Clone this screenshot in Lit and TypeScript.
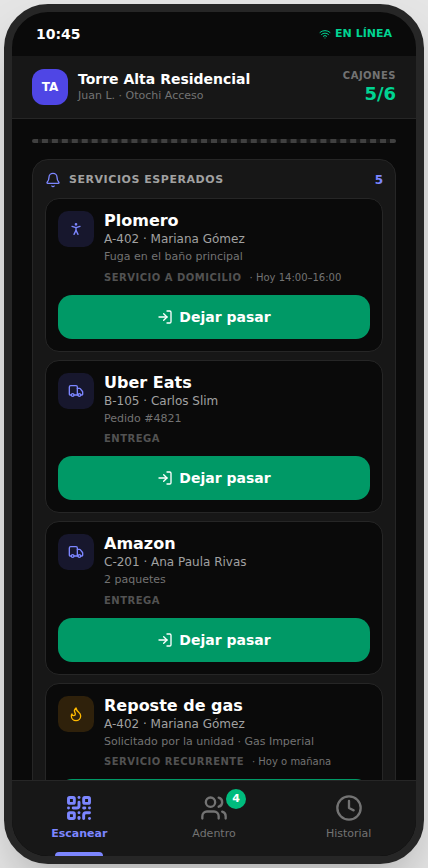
import { LitElement, html, css, svg, nothing } from "lit";
import { customElement, property } from "lit/decorators.js";

const ICONS: Record<string, unknown> = {
  wifi: svg`<path d="M12 20h.01"/><path d="M2 8.82a15 15 0 0 1 20 0"/><path d="M5 12.859a10 10 0 0 1 14 0"/><path d="M8.5 16.429a5 5 0 0 1 7 0"/>`,
  bell: svg`<path d="M10.268 21a2 2 0 0 0 3.464 0"/><path d="M3.262 15.326A1 1 0 0 0 4 17h16a1 1 0 0 0 .74-1.673C19.41 13.956 18 12.499 18 8A6 6 0 0 0 6 8c0 4.499-1.411 5.956-2.738 7.326"/>`,
  person: svg`<circle cx="12" cy="5" r="1"/><path d="m9 20 3-6 3 6"/><path d="m6 8 6 2 6-2"/><path d="M12 10v4"/>`,
  truck: svg`<path d="M14 18V6a2 2 0 0 0-2-2H4a2 2 0 0 0-2 2v11a1 1 0 0 0 1 1h2"/><path d="M15 18H9"/><path d="M19 18h2a1 1 0 0 0 1-1v-3.65a1 1 0 0 0-.22-.624l-3.48-4.35A1 1 0 0 0 17.52 8H14"/><circle cx="17" cy="18" r="2"/><circle cx="7" cy="18" r="2"/>`,
  flame: svg`<path d="M8.5 14.5A2.5 2.5 0 0 0 11 12c0-1.38-.5-2-1-3-1.072-2.143-.224-4.054 2-6 .5 2.5 2 4.9 4 6.5 2 1.6 3 3.5 3 5.5a7 7 0 1 1-14 0c0-1.153.433-2.294 1-3a2.5 2.5 0 0 0 2.5 2.5z"/>`,
  login: svg`<path d="m10 17 5-5-5-5"/><path d="M15 12H3"/><path d="M15 3h4a2 2 0 0 1 2 2v14a2 2 0 0 1-2 2h-4"/>`,
  qr: svg`<rect width="5" height="5" x="3" y="3" rx="1"/><rect width="5" height="5" x="16" y="3" rx="1"/><rect width="5" height="5" x="3" y="16" rx="1"/><path d="M21 16h-3a2 2 0 0 0-2 2v3"/><path d="M21 21v.01"/><path d="M12 7v3a2 2 0 0 1-2 2H7"/><path d="M3 12h.01"/><path d="M12 3h.01"/><path d="M12 16v.01"/><path d="M16 12h1"/><path d="M21 12v.01"/><path d="M12 21v-1"/>`,
  users: svg`<path d="M16 21v-2a4 4 0 0 0-4-4H6a4 4 0 0 0-4 4v2"/><circle cx="9" cy="7" r="4"/><path d="M22 21v-2a4 4 0 0 0-3-3.87"/><path d="M16 3.13a4 4 0 0 1 0 7.75"/>`,
  clock: svg`<circle cx="12" cy="12" r="10"/><path d="M12 6v6l4 2"/>`,
};

const icon = (name: string, size: number, stroke = 2) => html`<svg
  width=${size} height=${size} viewBox="0 0 24 24" fill="none" stroke="currentColor"
  stroke-width=${stroke} stroke-linecap="round" stroke-linejoin="round">${ICONS[name]}</svg>`;

interface Service {
  icon: string;
  title: string;
  unit: string;
  detail: string;
  kind: string;
  when?: string;
  warm?: boolean;
}

const SERVICES: Service[] = [
  { icon: "person", title: "Plomero", unit: "A-402 · Mariana Gómez", detail: "Fuga en el baño principal", kind: "Servicio a domicilio", when: "Hoy 14:00–16:00" },
  { icon: "truck", title: "Uber Eats", unit: "B-105 · Carlos Slim", detail: "Pedido #4821", kind: "Entrega" },
  { icon: "truck", title: "Amazon", unit: "C-201 · Ana Paula Rivas", detail: "2 paquetes", kind: "Entrega" },
  { icon: "flame", title: "Reposte de gas", unit: "A-402 · Mariana Gómez", detail: "Solicitado por la unidad · Gas Imperial", kind: "Servicio recurrente", when: "Hoy o mañana", warm: true },
];

@customElement("service-card")
class ServiceCard extends LitElement {
  @property({ attribute: false }) service!: Service;

  static styles = css`
    :host { display: block; box-sizing: border-box; flex: none; background: #0a0a0a; border: 1px solid #262626; border-radius: 14px; padding: 12px; }
    svg { display: block; flex: none; }
    .row { display: flex; gap: 10px; margin-bottom: 10px; }
    .tile { width: 36px; height: 36px; flex: none; border-radius: 10px; display: flex; align-items: center; justify-content: center; background: #17172d; color: #7c86ff; }
    .tile.warm { background: #2f210b; color: #ffb900; }
    .title { font-size: 16px; line-height: 20px; font-weight: 700; color: #fff; }
    .unit { font-size: 12px; line-height: 16px; color: #a1a1a1; }
    .detail { font-size: 11px; line-height: 16.5px; margin-top: 2px; color: #737373; }
    .meta { font-size: 10px; line-height: 15px; margin-top: 4px; display: flex; gap: 8px; color: #737373; }
    .kind { font-weight: 700; letter-spacing: 0.5px; text-transform: uppercase; color: #525252; }
    button { width: 100%; height: 44px; border: 0; border-radius: 14px; background: #009966; color: #fff; font: 700 14px "DejaVu Sans", sans-serif; display: flex; align-items: center; justify-content: center; gap: 6px; padding: 0; }
  `;

  render() {
    const s = this.service;
    return html`
      <div class="row">
        <div class="tile ${s.warm ? "warm" : ""}">${icon(s.icon, 16)}</div>
        <div>
          <div class="title">${s.title}</div>
          <div class="unit">${s.unit}</div>
          <div class="detail">${s.detail}</div>
          <div class="meta"><span class="kind">${s.kind}</span>${s.when ? html`<span>· ${s.when}</span>` : nothing}</div>
        </div>
      </div>
      <button>${icon("login", 16)}<span>Dejar pasar</span></button>
    `;
  }
}

@customElement("app-root")
class AppRoot extends LitElement {
  static styles = css`
    :host { display: flex; box-sizing: border-box; width: 100%; height: 868px; padding: 4px; background: #e5e5e5; overflow: hidden; font-family: "DejaVu Sans", sans-serif; }
    svg { display: block; flex: none; }
    .phone { box-sizing: border-box; width: 420px; height: 860px; border: 8px solid #262626; border-radius: 44px; background: #0a0a0a; overflow: hidden; display: flex; flex-direction: column; box-shadow: 0 25px 50px -12px rgba(0, 0, 0, 0.25); }
    .status { height: 44px; flex: none; padding: 0 24px; display: flex; align-items: center; justify-content: space-between; color: #fff; font-size: 14px; font-weight: 700; }
    .online { display: flex; align-items: center; gap: 4px; font-size: 11px; line-height: 16.5px; color: #00d492; }
    .head { box-sizing: border-box; height: 63px; flex: none; padding: 0 20px; background: #171717; border-bottom: 1px solid #262626; display: flex; align-items: center; gap: 10px; }
    .avatar { width: 36px; height: 36px; border-radius: 12px; background: #4f46e5; color: #fff; font-size: 12px; font-weight: 700; display: flex; align-items: center; justify-content: center; }
    .who { flex: 1; }
    .name { font-size: 14px; line-height: 16px; padding-bottom: 2px; font-weight: 700; color: #fff; }
    .sub { font-size: 11px; line-height: 13px; padding-bottom: 1px; color: #737373; }
    .slots { text-align: right; font-weight: 700; }
    .slots-label { font-size: 10px; line-height: 15px; letter-spacing: 0.5px; color: #737373; }
    .slots-value { font-size: 18px; line-height: 22.5px; color: #00d492; }
    .main { flex: 1; min-height: 0; overflow: hidden; padding: 20px 20px 0; display: flex; flex-direction: column; gap: 16px; }
    .strip { box-sizing: border-box; height: 4px; flex: none; border: 2px dashed #404040; border-radius: 16px; background: #171717; }
    .panel { flex: none; border: 1px solid #262626; border-radius: 16px; background: #171717; padding: 12px; display: flex; flex-direction: column; gap: 8px; }
    .panel-head { height: 16px; margin-bottom: 2px; display: flex; align-items: center; gap: 8px; color: #7c86ff; font-size: 12px; font-weight: 700; }
    .panel-title { flex: 1; font-size: 11px; line-height: 16px; padding-bottom: 1px; letter-spacing: 0.55px; color: #a1a1a1; }
    .nav { box-sizing: border-box; height: 76px; flex: none; border-top: 1px solid #262626; background: #171717; display: grid; grid-template-columns: repeat(3, 1fr); }
    .tab { position: relative; display: flex; flex-direction: column; align-items: center; gap: 4px; padding-top: 13px; color: #737373; font-size: 11px; line-height: 16.5px; }
    .tab.active { color: #7c86ff; font-weight: 700; }
    .tab.active::after { content: ""; position: absolute; bottom: 0; width: 48px; height: 4px; border-radius: 4px 4px 0 0; background: #7c86ff; }
    .glyph { position: relative; }
    .badge { position: absolute; top: -5px; right: -18px; width: 20px; height: 20px; border-radius: 50%; background: #00bc7d; color: #fff; font-size: 11px; line-height: 19px; font-weight: 700; text-align: center; }
  `;

  render() {
    return html`
      <div class="phone">
        <div class="status"><span>10:45</span><span class="online">${icon("wifi", 12)}<span>EN LÍNEA</span></span></div>
        <div class="head">
          <div class="avatar">TA</div>
          <div class="who">
            <div class="name">Torre Alta Residencial</div>
            <div class="sub">Juan L. · Otochi Acceso</div>
          </div>
          <div class="slots">
            <div class="slots-label">CAJONES</div>
            <div class="slots-value">5/6</div>
          </div>
        </div>
        <div class="main">
          <div class="strip"></div>
          <div class="panel">
            <div class="panel-head">${icon("bell", 16)}<span class="panel-title">SERVICIOS ESPERADOS</span><span>5</span></div>
            ${SERVICES.map((s) => html`<service-card .service=${s}></service-card>`)}
          </div>
        </div>
        <div class="nav">
          <div class="tab active">${icon("qr", 28, 2.5)}<span>Escanear</span></div>
          <div class="tab"><div class="glyph">${icon("users", 28)}<span class="badge">4</span></div><span>Adentro</span></div>
          <div class="tab">${icon("clock", 28)}<span>Historial</span></div>
        </div>
      </div>
    `;
  }
}
